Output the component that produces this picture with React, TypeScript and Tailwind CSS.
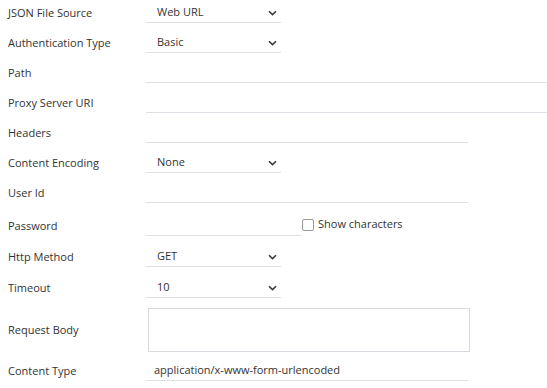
import { ReactNode } from 'react'

const font = { fontFamily: '"Open Sans", "Noto Sans", sans-serif' }

function Chevron() {
  return (
    <svg width="9" height="6" viewBox="0 0 9 6" className="shrink-0">
      <path d="M1 1.2 L4.5 4.6 L8 1.2" fill="none" stroke="#3a3a3a" strokeWidth="1.6" />
    </svg>
  )
}

function Row({ label, children, className = '' }: { label: string; children?: ReactNode; className?: string }) {
  return (
    <div className={`flex items-center h-[20px] ${className}`}>
      <div className="w-[146px] pl-2 shrink-0 text-[11px] text-[#333]">{label}</div>
      {children}
    </div>
  )
}

function Select({ value }: { value: string }) {
  return (
    <div className="w-[135px] h-full flex items-center justify-between pl-[11px] pr-[4px] border-b border-[#dcdfe3] text-[11px] text-[#333]">
      <span>{value}</span>
      <Chevron />
    </div>
  )
}

function Input({ width, value }: { width: string; value?: string }) {
  return (
    <div className={`${width} h-full flex items-center pl-[8px] border-b border-[#dcdfe3] text-[11px] text-[#333]`}>
      {value}
    </div>
  )
}

export default function App() {
  return (
    <div className="w-[547px] h-[388px] bg-white pt-[3px] overflow-hidden" style={font}>
      <Row label="JSON File Source">
        <Select value="Web URL" />
      </Row>
      <Row label="Authentication Type" className="mt-[10px]">
        <Select value="Basic" />
      </Row>
      <Row label="Path" className="mt-[10px]">
        <Input width="flex-1" />
      </Row>
      <Row label="Proxy Server URI" className="mt-[10px]">
        <Input width="flex-1" />
      </Row>
      <Row label="Headers" className="mt-[10px]">
        <Input width="w-[322px]" />
      </Row>
      <Row label="Content Encoding" className="mt-[10px]">
        <Select value="None" />
      </Row>
      <Row label="User Id" className="mt-[10px]">
        <Input width="w-[322px]" />
      </Row>
      <Row label="Password" className="mt-[13px]">
        <Input width="w-[155px]" />
        <label className="flex items-center gap-[4px] ml-[1px] -mt-[3px] text-[11px] text-[#333]">
          <span className="w-[12px] h-[12px] border border-[#9a9a9a] rounded-[2px] bg-white" />
          Show characters
        </label>
      </Row>
      <Row label="Http Method" className="mt-[11px]">
        <Select value="GET" />
      </Row>
      <Row label="Timeout" className="mt-[11px]">
        <Select value="10" />
      </Row>
      <div className="flex items-center mt-[10px] h-[44px]">
        <div className="w-[148px] pl-2 shrink-0 text-[11px] text-[#333]">Request Body</div>
        <div className="w-[322px] h-full border border-[#d6d9dd]" />
      </div>
      <Row label="Content Type" className="mt-[9px]">
        <Input width="w-[322px]" value="application/x-www-form-urlencoded" />
      </Row>
    </div>
  )
}
